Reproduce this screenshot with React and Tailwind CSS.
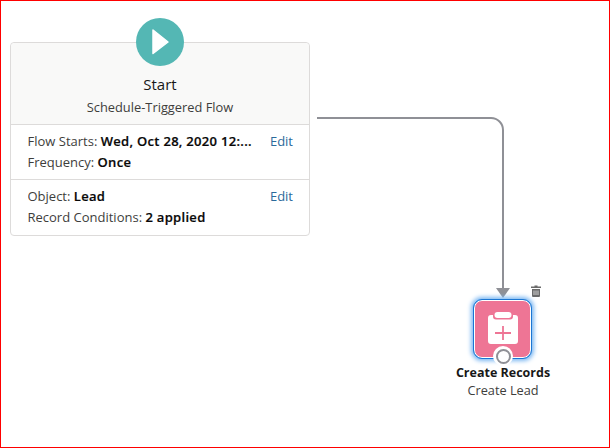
import React from "react";

const font = { fontFamily: '"Open Sans", sans-serif' };

const Row = ({ label, value, edit }) => (
	<div className="flex justify-between items-center h-[21px]">
		<span className="truncate">
			{label} <span className="font-semibold tracking-[0.3px] text-[#080707] [-webkit-text-stroke:0.2px_#080707]">{value}</span>
		</span>
		{edit && <span className="text-[#2b6a9b] ml-[17px]">Edit</span>}
	</div>
);

const App = () => {
	return (
		<div
			className="relative w-[610px] h-[448px] bg-white border border-[#ff0000] overflow-hidden text-[13px] text-[#3e3e3c]"
			style={font}>
			{/* start node */}
			<div className="absolute left-[9px] top-[41px] w-[300px] h-[194px] rounded border border-[#dddbda] bg-white">
				<div className="h-[82px] bg-[#f9f9f8] rounded-t border-b border-[#dddbda] flex flex-col items-center pt-[30px]">
					<div className="text-[15px] leading-[22px] text-[#181818]">Start</div>
					<div className="mt-[2px] leading-[20px] text-[12.85px] text-[#3e3e3c]">
						Schedule-Triggered Flow
					</div>
				</div>
				<div className="h-[55px] border-b border-[#dddbda] pl-[16.5px] pr-[16px] pt-[6px]">
					<Row label="Flow Starts:" value="Wed, Oct 28, 2020 12:..." edit />
					<Row label="Frequency:" value="Once" />
				</div>
				<div className="pl-[16.5px] pr-[16px] pt-[6px]">
					<Row label="Object:" value="Lead" edit />
					<Row label="Record Conditions:" value="2 applied" />
				</div>
			</div>
			<div className="absolute left-[135px] top-[17px] w-12 h-12 rounded-full bg-[#54b7b4] flex items-center justify-center">
				<svg width="48" height="48" viewBox="0 0 48 48">
					<path d="M17 12 L32 24 L17 35.5 Z" fill="#fff" stroke="#fff" strokeWidth="1.5" strokeLinejoin="round" />
				</svg>
			</div>

			{/* connector */}
			<svg className="absolute left-[310px] top-[110px]" width="200" height="190" viewBox="0 0 200 190">
				<path d="M6 7 H180 A12 12 0 0 1 192 19 V178" fill="none" stroke="#8f9096" strokeWidth="2" />
				<path d="M185 177 H199 L192 187 Z" fill="#8f9096" />
			</svg>

			{/* trash */}
			<svg className="absolute left-[530px] top-[284px]" width="10" height="12" viewBox="0 0 10 12">
				<path d="M3.5 0.5 H6.5 V1.5 H10 V3 H0 V1.5 H3.5 Z" fill="#6a6a6a" />
				<path d="M1 4 H9 V11 Q9 12 8 12 H2 Q1 12 1 11 Z" fill="#6a6a6a" />
				<path d="M3 5.5 V10 M5 5.5 V10 M7 5.5 V10" stroke="#fff" strokeWidth="0.7" />
			</svg>

			{/* create records node */}
			<div className="absolute left-[473px] top-[299px] w-[57px] h-[58px] rounded-[8px] bg-[#ee7595] border border-white outline outline-[#1b76d3] shadow-[0_0_4px_3px_#7db8f2] flex items-center justify-center">
				<svg className="mb-[2px]" width="30" height="32" viewBox="0 0 30 32">
					<path d="M3 3 H5 V4.5 Q5 7.5 8 7.5 H22 Q25 7.5 25 4.5 V3 H27 Q30 3 30 6 V29 Q30 32 27 32 H3 Q0 32 0 29 V6 Q0 3 3 3 Z" fill="#fff" />
					<rect x="6.5" y="0" width="17" height="6" rx="3" fill="#fff" />
					<path d="M15 14 V28 M7 21 H23" stroke="#ee7595" strokeWidth="1.8" />
				</svg>
			</div>
			<div className="absolute left-[492px] top-[345px] w-5 h-5 rounded-full bg-white flex items-center justify-center">
				<div className="w-[15px] h-[15px] rounded-full bg-white border-2 border-[#8f9096]" />
			</div>
			<div className="absolute left-[432px] top-[362px] w-[140px] text-center">
				<div className="font-bold text-[#181818] text-[12.5px] leading-[19px]">Create Records</div>
				<div className="text-[12.75px] leading-[17px]">Create Lead</div>
			</div>
		</div>
	);
};

export default App;
